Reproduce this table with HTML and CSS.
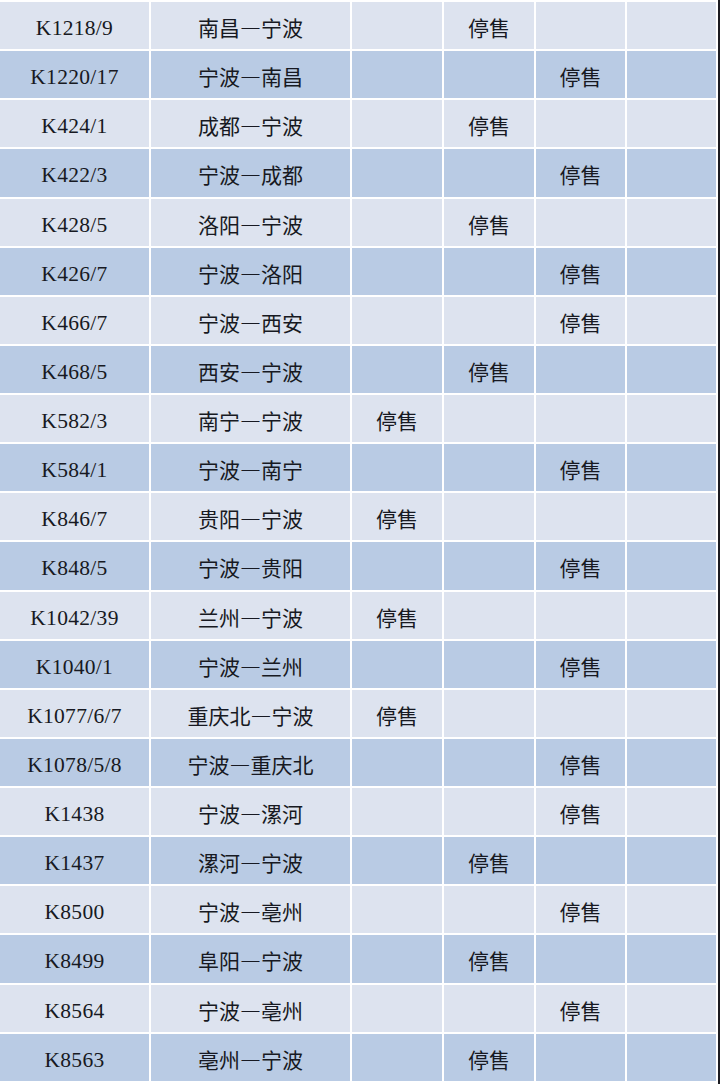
FILE: index.html
```html
<!DOCTYPE html>
<html lang="zh-CN">
<head>
<meta charset="utf-8">
<title>停售列车</title>
<link rel="stylesheet" href="styles.css">
</head>
<body>
<div class="sheet">
  <div class="tbl">
    <div class="row light"><div class="c no">K1218/9</div><div class="c rt">南昌—宁波</div><div class="c"></div><div class="c st">停售</div><div class="c"></div><div class="c"></div></div>
    <div class="row dark"><div class="c no">K1220/17</div><div class="c rt">宁波—南昌</div><div class="c"></div><div class="c"></div><div class="c st">停售</div><div class="c"></div></div>
    <div class="row light"><div class="c no">K424/1</div><div class="c rt">成都—宁波</div><div class="c"></div><div class="c st">停售</div><div class="c"></div><div class="c"></div></div>
    <div class="row dark"><div class="c no">K422/3</div><div class="c rt">宁波—成都</div><div class="c"></div><div class="c"></div><div class="c st">停售</div><div class="c"></div></div>
    <div class="row light"><div class="c no">K428/5</div><div class="c rt">洛阳—宁波</div><div class="c"></div><div class="c st">停售</div><div class="c"></div><div class="c"></div></div>
    <div class="row dark"><div class="c no">K426/7</div><div class="c rt">宁波—洛阳</div><div class="c"></div><div class="c"></div><div class="c st">停售</div><div class="c"></div></div>
    <div class="row light"><div class="c no">K466/7</div><div class="c rt">宁波—西安</div><div class="c"></div><div class="c"></div><div class="c st">停售</div><div class="c"></div></div>
    <div class="row dark"><div class="c no">K468/5</div><div class="c rt">西安—宁波</div><div class="c"></div><div class="c st">停售</div><div class="c"></div><div class="c"></div></div>
    <div class="row light"><div class="c no">K582/3</div><div class="c rt">南宁—宁波</div><div class="c st">停售</div><div class="c"></div><div class="c"></div><div class="c"></div></div>
    <div class="row dark"><div class="c no">K584/1</div><div class="c rt">宁波—南宁</div><div class="c"></div><div class="c"></div><div class="c st">停售</div><div class="c"></div></div>
    <div class="row light"><div class="c no">K846/7</div><div class="c rt">贵阳—宁波</div><div class="c st">停售</div><div class="c"></div><div class="c"></div><div class="c"></div></div>
    <div class="row dark"><div class="c no">K848/5</div><div class="c rt">宁波—贵阳</div><div class="c"></div><div class="c"></div><div class="c st">停售</div><div class="c"></div></div>
    <div class="row light"><div class="c no">K1042/39</div><div class="c rt">兰州—宁波</div><div class="c st">停售</div><div class="c"></div><div class="c"></div><div class="c"></div></div>
    <div class="row dark"><div class="c no">K1040/1</div><div class="c rt">宁波—兰州</div><div class="c"></div><div class="c"></div><div class="c st">停售</div><div class="c"></div></div>
    <div class="row light"><div class="c no">K1077/6/7</div><div class="c rt">重庆北—宁波</div><div class="c st">停售</div><div class="c"></div><div class="c"></div><div class="c"></div></div>
    <div class="row dark"><div class="c no">K1078/5/8</div><div class="c rt">宁波—重庆北</div><div class="c"></div><div class="c"></div><div class="c st">停售</div><div class="c"></div></div>
    <div class="row light"><div class="c no">K1438</div><div class="c rt">宁波—漯河</div><div class="c"></div><div class="c"></div><div class="c st">停售</div><div class="c"></div></div>
    <div class="row dark"><div class="c no">K1437</div><div class="c rt">漯河—宁波</div><div class="c"></div><div class="c st">停售</div><div class="c"></div><div class="c"></div></div>
    <div class="row light"><div class="c no">K8500</div><div class="c rt">宁波—亳州</div><div class="c"></div><div class="c"></div><div class="c st">停售</div><div class="c"></div></div>
    <div class="row dark"><div class="c no">K8499</div><div class="c rt">阜阳—宁波</div><div class="c"></div><div class="c st">停售</div><div class="c"></div><div class="c"></div></div>
    <div class="row light"><div class="c no">K8564</div><div class="c rt">宁波—亳州</div><div class="c"></div><div class="c"></div><div class="c st">停售</div><div class="c"></div></div>
    <div class="row dark"><div class="c no">K8563</div><div class="c rt">亳州—宁波</div><div class="c"></div><div class="c st">停售</div><div class="c"></div><div class="c"></div></div>
  </div>
</div>
</body>
</html>
```

FILE: styles.css
```css
html, body {
  margin: 0;
  padding: 0;
  background: #ffffff;
}

.sheet {
  width: 720px;
  height: 1084px;
  overflow: hidden;
  box-sizing: border-box;
  border-right: 2px solid #1c1c22;
  background: #ffffff;
}

.tbl {
  display: flex;
  flex-direction: column;
  gap: 2px;
  padding: 2px 2px 0 0;
}

.row {
  display: grid;
  grid-template-columns: 149px 199px 90px 90px 89px 89px;
  column-gap: 2px;
  height: 47.14px;
}

.c {
  display: flex;
  align-items: center;
  justify-content: center;
  padding-top: 3px;
  box-sizing: border-box;
  color: #171922;
  white-space: nowrap;
}

.light .c { background: #dde3ef; }
.dark .c { background: #b9cbe4; }

.no {
  font-family: "Liberation Serif", "Noto Sans CJK SC", serif;
  font-size: 21.5px;
  letter-spacing: 0.3px;
  padding-top: 6px;
}

.rt, .st {
  font-family: "Noto Sans CJK SC", sans-serif;
  font-size: 21px;
  font-weight: 400;
}
```
